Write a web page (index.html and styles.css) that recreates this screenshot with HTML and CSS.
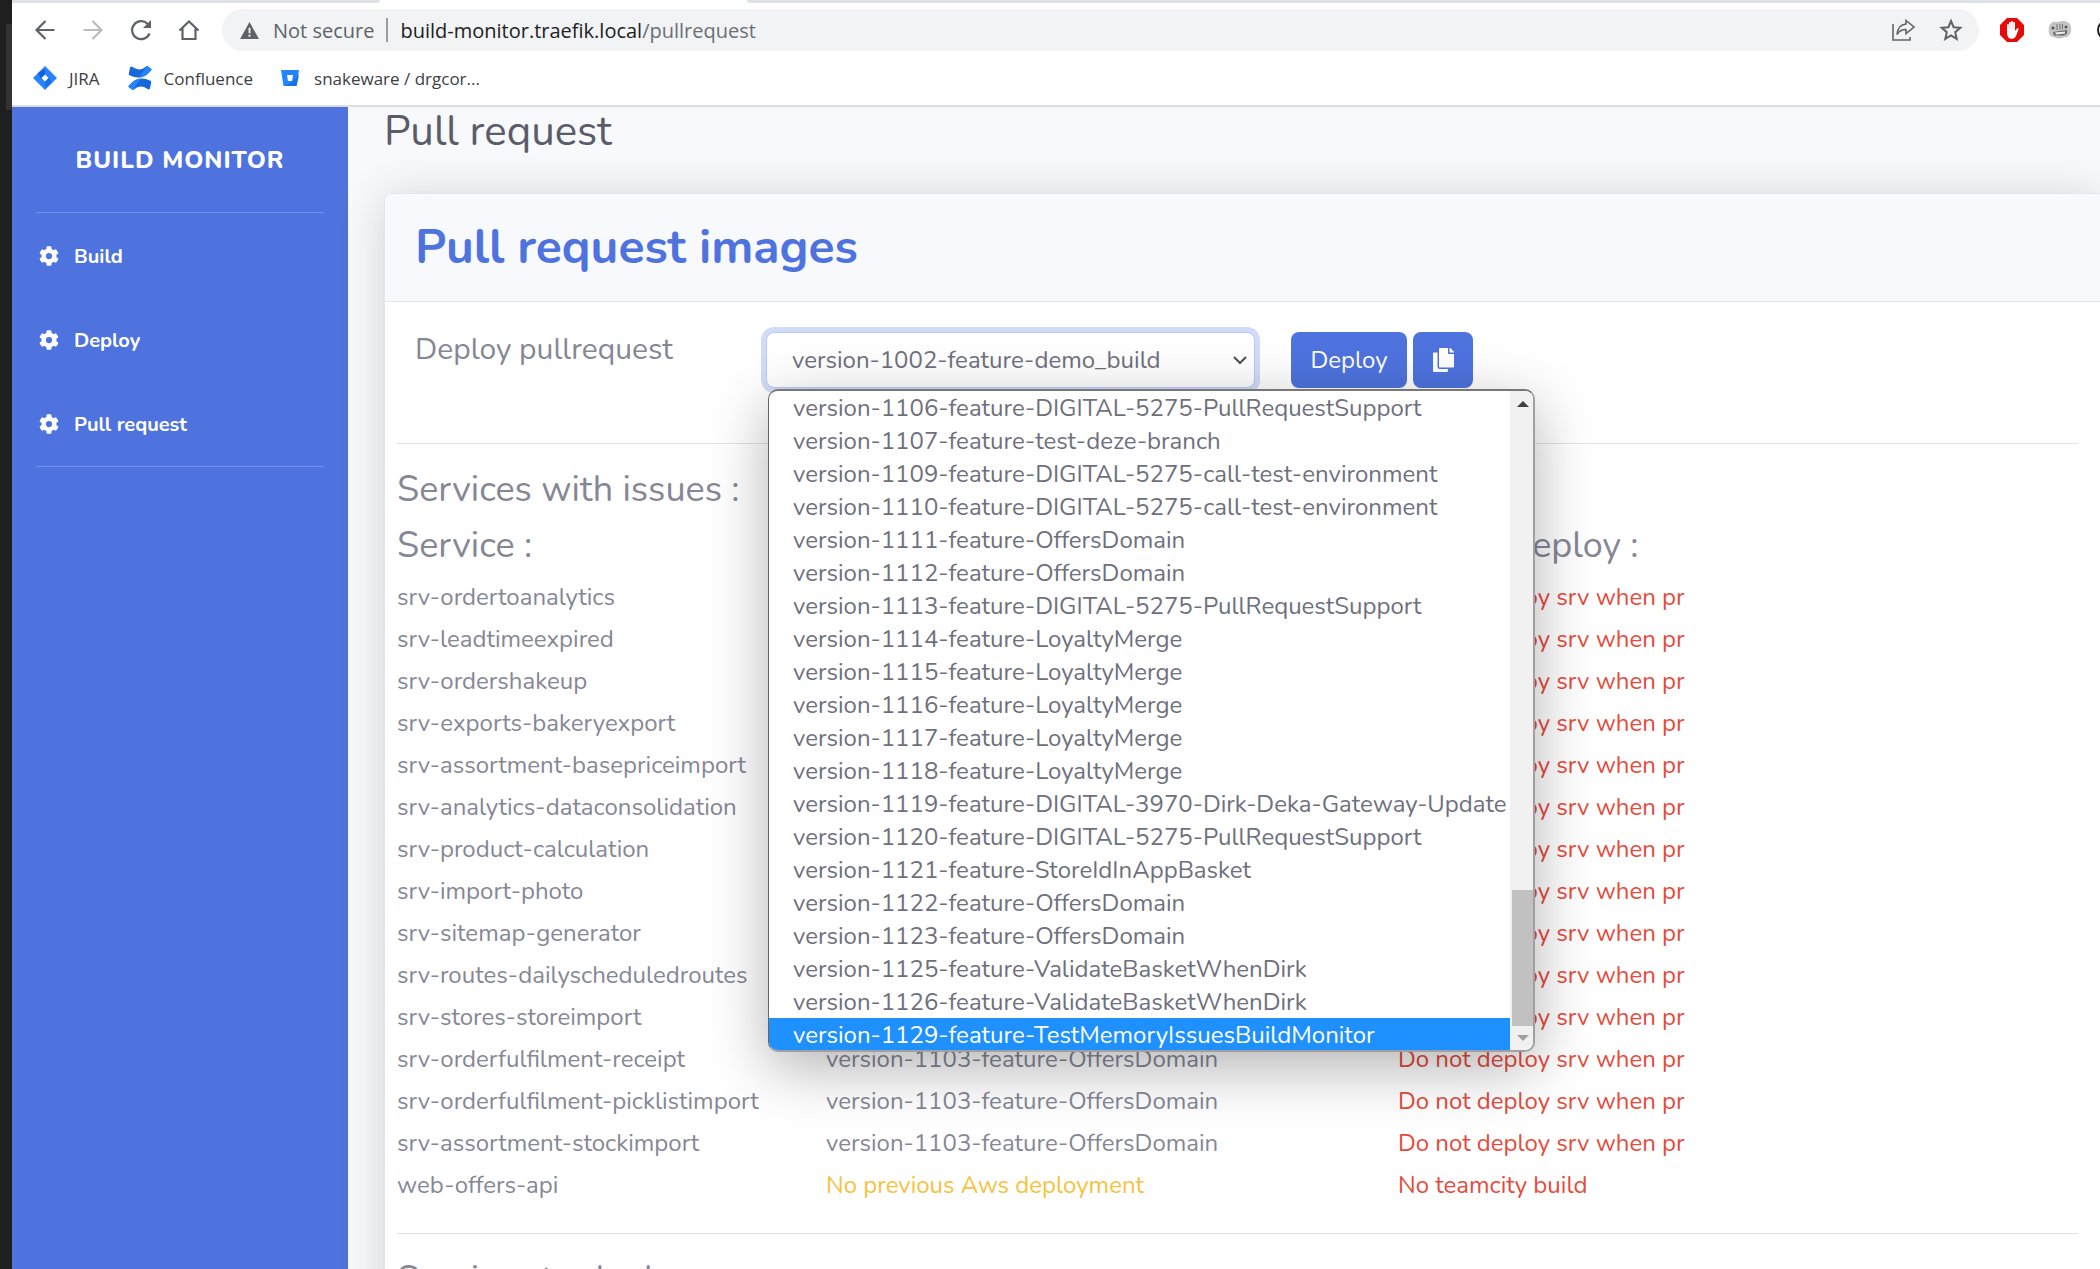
FILE: index.html
```html
<!DOCTYPE html>
<html lang="en">
<head>
<meta charset="utf-8">
<title>Build Monitor - Pull request</title>
<link rel="stylesheet" href="styles.css">
</head>
<body>
<svg class="defs" aria-hidden="true">
  <symbol id="cog" viewBox="0 0 512 512"><path fill="currentColor" d="M487 316l-43-25c4-23 4-47 0-70l43-25c5-3 7-9 6-14-11-36-30-69-55-95-4-4-10-5-15-3l-43 25c-18-15-39-27-61-35V24c0-6-4-11-9-12-36-8-74-8-110 0-5 1-9 6-9 12v50c-22 8-43 20-61 35L87 84c-5-3-11-2-15 3-25 27-44 59-55 95-2 5 1 11 6 14l43 25c-4 23-4 47 0 70l-43 25c-5 3-7 9-6 14 11 36 30 69 55 95 4 4 10 5 15 3l43-25c18 15 39 27 61 35v50c0 6 4 11 9 12 36 8 74 8 110 0 5-1 9-6 9-12v-50c22-8 43-20 61-35l43 25c5 3 11 2 15-3 25-27 44-59 55-95 2-5-1-11-6-14zM256 336a80 80 0 1 1 0-160 80 80 0 0 1 0 160z"/></symbol>
</svg>
<div class="window">
  <div class="desktop-edge"><span class="edge-panel"></span></div>
  <div class="browser">
    <header class="chrome">
      <div class="tabs"><span class="tab-before"></span><span class="tab-after"></span></div>
      <div class="toolbar">
        <button class="tool" aria-label="Back"><svg viewBox="0 0 24 24"><path d="M21.500 12H4M12.500 3L3.500 12l9 9" fill="none" stroke="#5f6368" stroke-width="2.200"/></svg></button>
        <button class="tool" aria-label="Forward"><svg viewBox="0 0 24 24"><path d="M2.500 12H20M11.500 3l9 9-9 9" fill="none" stroke="#babcbe" stroke-width="2.200"/></svg></button>
        <button class="tool" aria-label="Reload"><svg viewBox="0 0 24 24"><path d="M20.500 15.500A9 9 0 1 1 18.500 5.800L20 7.500" fill="none" stroke="#5f6368" stroke-width="2.200"/><path d="M22 2v8h-8z" fill="#5f6368"/></svg></button>
        <button class="tool" aria-label="Home"><svg viewBox="0 0 24 24"><path d="M2.500 12.500L12 3.500l9.500 9M5.500 10.500V21h13V10.500" fill="none" stroke="#5f6368" stroke-width="2.200"/></svg></button>
        <div class="omnibox">
          <svg class="warn" viewBox="0 0 20 18"><path d="M10 0l10 18H0z" fill="#5f6368"/><path d="M9 6h2v6H9zM9 13.500h2v2H9z" fill="#f1f3f4"/></svg>
          <span class="secure">Not secure</span>
          <span class="divider"></span>
          <span class="url">build-monitor.traefik.local<span class="path">/pullrequest</span></span>
          <button class="omni-btn" aria-label="Share"><svg viewBox="0 0 24 24"><path d="M2 6v16h17v-3" fill="none" stroke="#5f6368" stroke-width="1.600"/><path d="M15 2.500l8 6.500-8 6.500v-4c-4 0-7 1.500-9 5 .5-6 4-10 9-10.500z" fill="none" stroke="#5f6368" stroke-width="1.600"/></svg></button>
          <button class="omni-btn" aria-label="Bookmark this page"><svg viewBox="0 0 24 24"><path d="M12 3l2.600 6.200 6.700.6-5.100 4.400 1.500 6.600-5.700-3.500-5.700 3.500 1.500-6.600-5.100-4.400 6.700-.6z" fill="none" stroke="#5f6368" stroke-width="2"/></svg></button>
        </div>
        <button class="tool ext" aria-label="Ad blocker"><svg viewBox="0 0 24 24"><path d="M7 0h10l7 7v10l-7 7H7l-7-7V7z" fill="#e60b0b"/><path d="M7 14V7a1 1 0 0 1 2 0V5a1 1 0 0 1 2 0V4a1 1 0 0 1 2 0v1a1 1 0 0 1 2 0v8l2-2.500c1-.8 2 0 1.500 1L16 18c-1 2-2.500 2.800-4.500 2.800C8.500 20.800 7 18 7 14z" fill="#fff"/><path d="M9 6v5M11 5v6M13 5v6" stroke="#e8a0a0" stroke-width=".5"/></svg></button>
        <button class="tool ext" aria-label="Extension"><svg viewBox="0 0 24 24"><path d="M1 9c1-5 5-6 9-5 5-2 12-1 13 5 1 6-2 11-7 10-4 3-8 1-10 0C1 19 0 14 1 9z" fill="#c4c4c4"/><circle cx="5" cy="10" r="1.500" fill="#555"/><circle cx="18" cy="9" r="1.500" fill="#555"/><path d="M9 6v6M12 6v6M14.500 6v5" stroke="#777"/><path d="M5 14l14-2v3.500l-3 2H6z" fill="#666"/><path d="M7 14.500l10-1v2l-9 1z" fill="#eee"/></svg></button>
        <button class="tool ext" aria-label="Next extension"><svg viewBox="0 0 24 24"><circle cx="12" cy="12" r="10" fill="none" stroke="#222" stroke-width="2"/></svg></button>
      </div>
      <nav class="bookmarks" aria-label="Bookmarks">
        <a class="bookmark jira" href="#"><svg viewBox="0 0 24 24"><path d="M12 0l12 12-12 12L0 12z" fill="#2684ff"/><path d="M12 3v6l-4 4-3-6z" fill="#1161d8"/><path d="M12 21v-6l4-4 3 6z" fill="#1161d8" opacity=".6"/><path d="M12 8.500l3.500 3.500-3.500 3.500L8.500 12z" fill="#fff"/></svg>JIRA</a>
        <a class="bookmark confluence" href="#"><svg viewBox="0 0 24 24"><path d="M2 1.500Q3 0 4.500 1 12 6 18 .5q1-.8 2 0l3 2.200q1 .8 0 1.800-9 11-21 5Q.5 9 .8 7.500z" fill="#1868db"/><path d="M22 22.500q-1 1.500-2.500.5-7.500-5-13.500.5-1 .8-2 0l-3-2.200q-1-.8 0-1.800 9-11 21-5 1.500.5 1.200 2z" fill="#1868db"/><path d="M23 4.500Q17 12 10 11.500 15 8 18 .5q1-.8 2 0l3 2.200q1 .8 0 1.800zM1 19.500Q7 12 14 12.500 9 16 6 23.500q-1 .8-2 0l-3-2.200q-1-.8 0-1.800z" fill="#2684ff"/></svg>Confluence</a>
        <a class="bookmark bitbucket" href="#"><svg viewBox="0 0 18 18"><path d="M0 1h18l-2.500 16h-13z" fill="#2684ff"/><path d="M11.500 12L18 6l-2.500 11h-10z" fill="#1673ec"/><path d="M6 6h6l-1 6H7z" fill="#fff"/></svg>snakeware / drgcor...</a>
      </nav>
    </header>
    <div class="page">
      <aside class="sidebar">
        <a class="brand" href="#">BUILD MONITOR</a>
        <nav class="nav">
          <a href="#"><svg><use href="#cog"/></svg>Build</a>
          <a href="#"><svg><use href="#cog"/></svg>Deploy</a>
          <a href="#"><svg><use href="#cog"/></svg>Pull request</a>
        </nav>
      </aside>
      <main class="content">
        <h1>Pull request</h1>
        <section class="card">
          <h2>Pull request images</h2>
          <div class="card-body">
            <form class="deploy-form" onsubmit="return false">
              <label for="version">Deploy pullrequest</label>
              <div class="picker">
                <select id="version"><option>version-1002-feature-demo_build</option></select>
                <svg class="chevron" viewBox="0 0 14 10"><path d="M1 2l6 6 6-6" fill="none" stroke="#505050" stroke-width="2"/></svg>
                <div class="popup">
                  <ul class="options" role="listbox" aria-label="Versions">
                    <li role="option">version-1106-feature-DIGITAL-5275-PullRequestSupport</li>
                    <li role="option">version-1107-feature-test-deze-branch</li>
                    <li role="option">version-1109-feature-DIGITAL-5275-call-test-environment</li>
                    <li role="option">version-1110-feature-DIGITAL-5275-call-test-environment</li>
                    <li role="option">version-1111-feature-OffersDomain</li>
                    <li role="option">version-1112-feature-OffersDomain</li>
                    <li role="option">version-1113-feature-DIGITAL-5275-PullRequestSupport</li>
                    <li role="option">version-1114-feature-LoyaltyMerge</li>
                    <li role="option">version-1115-feature-LoyaltyMerge</li>
                    <li role="option">version-1116-feature-LoyaltyMerge</li>
                    <li role="option">version-1117-feature-LoyaltyMerge</li>
                    <li role="option">version-1118-feature-LoyaltyMerge</li>
                    <li role="option">version-1119-feature-DIGITAL-3970-Dirk-Deka-Gateway-Update</li>
                    <li role="option">version-1120-feature-DIGITAL-5275-PullRequestSupport</li>
                    <li role="option">version-1121-feature-StoreIdInAppBasket</li>
                    <li role="option">version-1122-feature-OffersDomain</li>
                    <li role="option">version-1123-feature-OffersDomain</li>
                    <li role="option">version-1125-feature-ValidateBasketWhenDirk</li>
                    <li role="option">version-1126-feature-ValidateBasketWhenDirk</li>
                    <li role="option" class="active" aria-selected="true">version-1129-feature-TestMemoryIssuesBuildMonitor</li>
                  </ul>
                  <div class="scrollbar">
                    <span class="arrow up"></span>
                    <span class="thumb"></span>
                    <span class="arrow down"></span>
                  </div>
                </div>
              </div>
              <div class="actions">
                <button class="btn">Deploy</button>
                <button class="btn copy" aria-label="Copy"><svg viewBox="0 0 448 512"><path fill="currentColor" d="M320 448v40c0 13-11 24-24 24H24c-13 0-24-11-24-24V120c0-13 11-24 24-24h72v296c0 31 25 56 56 56zm0-344V0H152c-13 0-24 11-24 24v368c0 13 11 24 24 24h272c13 0 24-11 24-24V128H344c-13 0-24-11-24-24zm121-31L375 7c-5-5-11-7-17-7h-6v96h96v-6c0-6-3-12-7-17z"/></svg></button>
              </div>
            </form>
            <hr>
            <h3>Services with issues :</h3>
            <table>
              <thead><tr><th class="c-service">Service :</th><th class="c-version">Version :</th><th>Status deploy :</th></tr></thead>
              <tbody>
                <tr><td>srv-ordertoanalytics</td><td>version-1103-feature-OffersDomain</td><td class="danger">Do not deploy srv when pr</td></tr>
                <tr><td>srv-leadtimeexpired</td><td>version-1103-feature-OffersDomain</td><td class="danger">Do not deploy srv when pr</td></tr>
                <tr><td>srv-ordershakeup</td><td>version-1103-feature-OffersDomain</td><td class="danger">Do not deploy srv when pr</td></tr>
                <tr><td>srv-exports-bakeryexport</td><td>version-1103-feature-OffersDomain</td><td class="danger">Do not deploy srv when pr</td></tr>
                <tr><td>srv-assortment-basepriceimport</td><td>version-1103-feature-OffersDomain</td><td class="danger">Do not deploy srv when pr</td></tr>
                <tr><td>srv-analytics-dataconsolidation</td><td>version-1103-feature-OffersDomain</td><td class="danger">Do not deploy srv when pr</td></tr>
                <tr><td>srv-product-calculation</td><td>version-1103-feature-OffersDomain</td><td class="danger">Do not deploy srv when pr</td></tr>
                <tr><td>srv-import-photo</td><td>version-1103-feature-OffersDomain</td><td class="danger">Do not deploy srv when pr</td></tr>
                <tr><td>srv-sitemap-generator</td><td>version-1103-feature-OffersDomain</td><td class="danger">Do not deploy srv when pr</td></tr>
                <tr><td>srv-routes-dailyscheduledroutes</td><td>version-1103-feature-OffersDomain</td><td class="danger">Do not deploy srv when pr</td></tr>
                <tr><td>srv-stores-storeimport</td><td>version-1103-feature-OffersDomain</td><td class="danger">Do not deploy srv when pr</td></tr>
                <tr><td>srv-orderfulfilment-receipt</td><td>version-1103-feature-OffersDomain</td><td class="danger">Do not deploy srv when pr</td></tr>
                <tr><td>srv-orderfulfilment-picklistimport</td><td>version-1103-feature-OffersDomain</td><td class="danger">Do not deploy srv when pr</td></tr>
                <tr><td>srv-assortment-stockimport</td><td>version-1103-feature-OffersDomain</td><td class="danger">Do not deploy srv when pr</td></tr>
                <tr><td>web-offers-api</td><td class="warning">No previous Aws deployment</td><td class="danger">No teamcity build</td></tr>
              </tbody>
            </table>
            <hr class="section-end">
            <h3>Services to deploy :</h3>
          </div>
        </section>
      </main>
    </div>
  </div>
</div>
</body>
</html>
```
FILE: styles.css
```css
* { box-sizing: border-box; }
body { margin: 0; font-family: Nunito, Lato, sans-serif; font-size: 24px; color: #858796; background: #fff; }
button { font: inherit; border: 0; padding: 0; background: none; }
a { color: inherit; text-decoration: none; }
svg { display: block; }
.defs { display: none; }

.window { display: flex; height: 100vh; overflow: hidden; }
.desktop-edge { flex: none; width: 12px; padding: 24px 0 0 6px; background: #1f1f1f; }
.edge-panel { display: block; height: 86px; background: #333; }
.browser { flex: 1; min-width: 0; display: flex; flex-direction: column; overflow: hidden; }

/* Browser chrome */
.chrome { flex: none; border-bottom: 2px solid #dadce0; font-family: "Segoe UI", "Open Sans", sans-serif; }
.tabs { display: flex; height: 3px; gap: 367px; }
.tab-before { width: 368px; background: #dee1e6; border-bottom-right-radius: 4px; }
.tab-after { flex: 1; background: #dee1e6; border-bottom-left-radius: 4px; }
.toolbar { display: flex; align-items: center; height: 54px; margin-right: -20px; padding-left: 21px; }
.tool { flex: none; width: 24px; margin-right: 24px; }
.tool svg { width: 24px; height: 24px; }
.omnibox { flex: 1; min-width: 0; display: flex; align-items: center; height: 42px; margin-left: -3px; padding: 0 16px 0 18px; border-radius: 21px; background: #f1f3f4; font-size: 20px; color: #5f6368; }
.warn { width: 19px; height: 17px; margin-right: 14px; }
.divider { width: 2px; height: 24px; margin: 0 12px; background: #9a9da1; }
.url { flex: 1; color: #202124; }
.path { color: #6b6f74; }
.omni-btn { margin-left: 24px; }
.omni-btn svg { width: 24px; height: 24px; }
.ext { margin: 0 0 0 24px; }
.omnibox + .ext { margin-left: 21px; }
.bookmarks { display: flex; align-items: center; gap: 28px; height: 48px; padding: 0 0 6px 21px; font-size: 17px; color: #3c4043; }
.bookmark { display: flex; align-items: center; gap: 12px; }
.bookmark svg { width: 24px; height: 24px; }
.bookmark.bitbucket svg { width: 18px; height: 18px; }
.bookmark.bitbucket { gap: 15px; }

/* Application */
.page { flex: 1; min-height: 0; display: flex; overflow: hidden; }
.sidebar { flex: none; width: 336px; padding: 0 24px; background: #4e73df; color: #fff; font-weight: 800; }
.brand { display: block; padding: 39px 0 37px; border-bottom: 1px solid #7190e6; font-size: 24px; line-height: 29px; letter-spacing: 1px; text-align: center; }
.nav { border-bottom: 1px solid #7190e6; padding: 1px 3px 0; font-size: 20px; font-weight: 700; }
.nav a { display: flex; align-items: center; gap: 15px; height: 84px; }
.nav svg { width: 20px; height: 20px; }
.content { flex: 1; min-width: 0; padding-left: 36px; background: #f8f9fc; }
h1, h2, h3 { margin: 0; font-weight: 400; }
h1 { font-size: 42px; line-height: 50px; color: #5a5c69; }
.card { margin-top: 36px; background: #fff; border: 1px solid #e3e6f0; border-right: 0; border-radius: 8px 0 0 0; box-shadow: 0 4px 44px rgba(58, 59, 69, 0.2); }
h2 { padding: 24px 30px 25px; border-bottom: 1px solid #e3e6f0; border-radius: 8px 0 0 0; background: #f8f9fc; color: #4e73df; font-size: 48px; line-height: 58px; font-weight: 700; }
.card-body { padding: 30px 22px 30px 12px; }
.deploy-form { display: flex; padding-left: 18px; }
label { flex: none; width: 351px; font-size: 30px; line-height: 36px; }
.picker { position: relative; flex: none; width: 489px; }
select { appearance: none; display: block; width: 100%; height: 56px; padding: 0 25px; border: 1px solid #bac8f3; border-radius: 8px; outline: 0; background: #fff; box-shadow: 0 0 0 5px #d2dcf8; color: #6e707e; font: inherit; }
.chevron { position: absolute; right: 8px; top: 23px; width: 14px; height: 10px; }
.actions { display: flex; gap: 6px; margin-left: 36px; }
.btn { display: flex; align-items: center; justify-content: center; width: 116px; height: 56px; border-radius: 8px; background: #4e73df; color: #fff; }
.btn.copy { width: 60px; }
.btn svg { width: 21px; height: 24px; }

.popup { position: absolute; z-index: 2; top: 57px; left: 2px; display: flex; width: 767px; border: 2px solid #a0a0a0; border-top-color: #777; border-left: 1px solid #666; border-radius: 10px; overflow: hidden; background: #fff; box-shadow: 0 16px 60px rgba(0, 0, 0, 0.3); }
.options { flex: 1; min-width: 0; margin: 0; padding: 0; list-style: none; color: #6e707e; }
.options li { height: 33px; padding-left: 24px; line-height: 34px; white-space: nowrap; }
.options .active { height: 32px; background: #1e90ff; color: #fff; }
.scrollbar { flex: none; display: flex; flex-direction: column; width: 23px; padding: 10px 0 9px 2px; background: #f1f1f1; }
.arrow { align-self: center; border: 6px solid transparent; }
.up { margin-bottom: auto; border-top: 0; border-bottom-color: #404040; }
.down { margin-top: 9px; border-bottom: 0; border-top-color: #a0a0a0; }
.thumb { height: 136px; background: #c1c1c1; }

hr { margin: 55px 0 24px; border: 0; border-top: 1px solid #e2e2e5; }
hr.section-end { margin-top: 27px; }
h3, th { font-size: 36px; line-height: 43px; }
h3 { margin-bottom: 13px; }
table { width: 100%; border-collapse: collapse; table-layout: fixed; }
th { padding: 0 0 9px; text-align: left; font-weight: 400; }
.c-service { width: 429px; }
.c-version { width: 572px; }
td { height: 42px; padding: 0; line-height: 42px; white-space: nowrap; }
.danger { color: #e74a3b; }
.warning { color: #f6c23e; }
```
